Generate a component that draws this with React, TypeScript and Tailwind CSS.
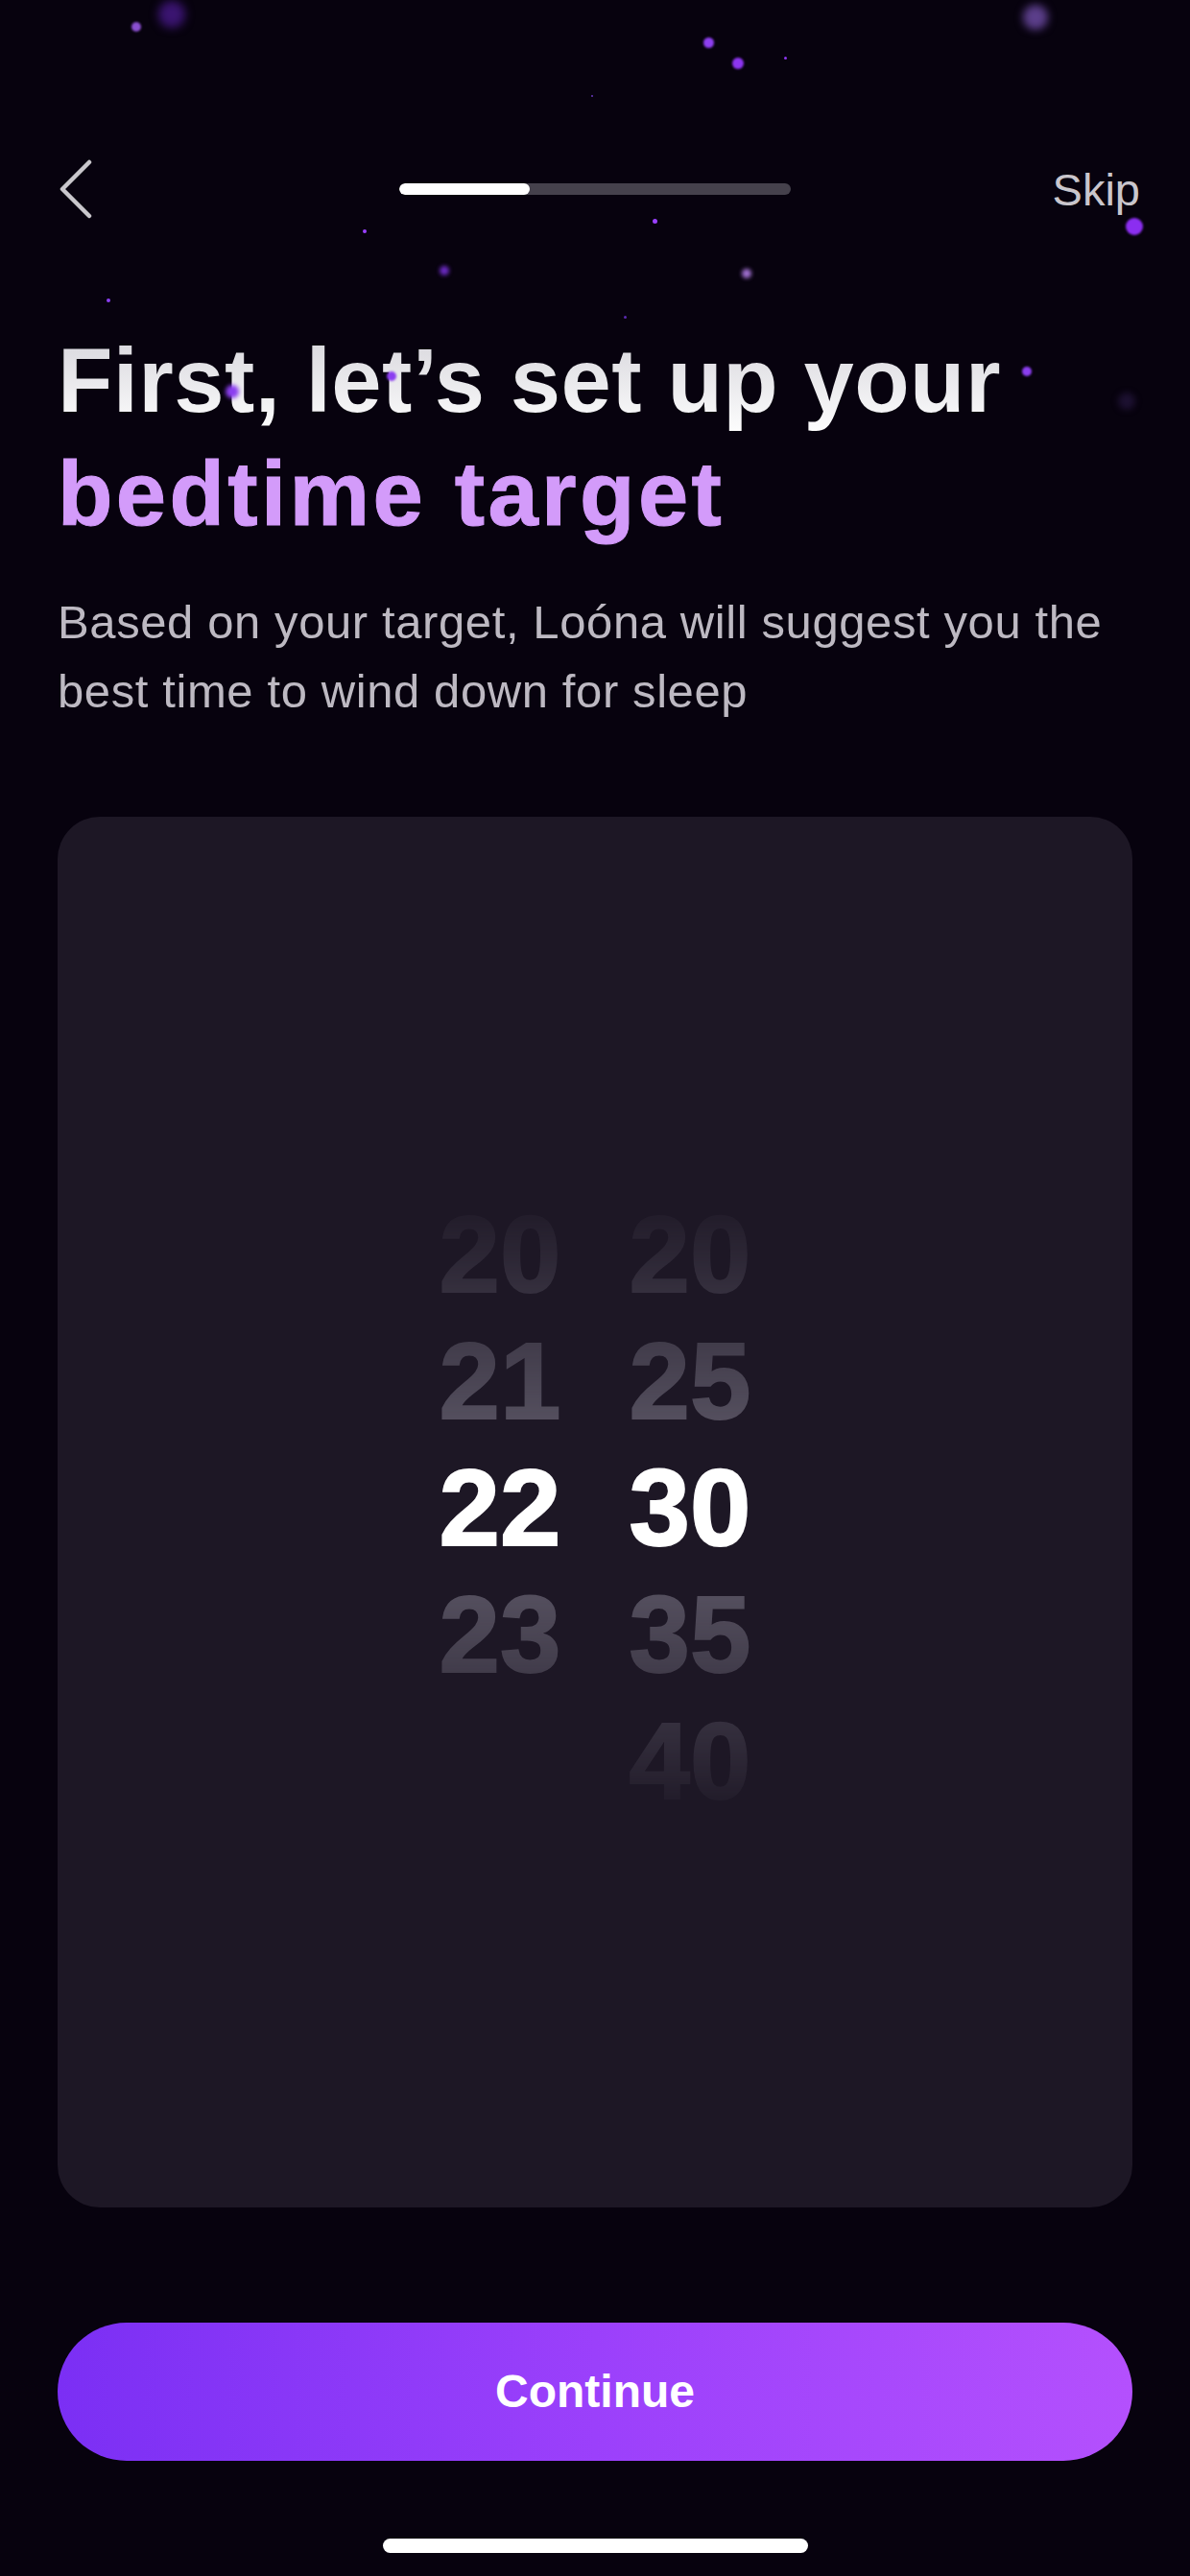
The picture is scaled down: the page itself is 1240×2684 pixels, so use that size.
import React from 'react';

const hours = [20, 21, 22, 23];
const minutes = [20, 25, 30, 35, 40];

// floating purple specks in the night sky
const sparks = [
  { x: 142, y: 28, d: 10, c: '#8a4fd0', b: 1 },
  { x: 179, y: 15, d: 28, c: '#3a1470', b: 5 },
  { x: 738, y: 44, d: 11, c: '#8e3ff0', b: 1 },
  { x: 769, y: 66, d: 12, c: '#8d35f0', b: 1 },
  { x: 818, y: 60, d: 3, c: '#8d35f0', b: 0 },
  { x: 617, y: 100, d: 2, c: '#6a3ac0', b: 0 },
  { x: 1079, y: 18, d: 26, c: '#5b3e8a', b: 4 },
  { x: 1182, y: 236, d: 18, c: '#8b2ef0', b: 1 },
  { x: 682, y: 230, d: 5, c: '#9a40ff', b: 0 },
  { x: 380, y: 241, d: 4, c: '#9a40ff', b: 0 },
  { x: 463, y: 282, d: 10, c: '#6a2ac0', b: 2 },
  { x: 778, y: 285, d: 10, c: '#a070d0', b: 2 },
  { x: 113, y: 313, d: 4, c: '#8a3ff0', b: 0 },
  { x: 651, y: 330, d: 3, c: '#5a2ab0', b: 0 },
  { x: 242, y: 408, d: 14, c: '#8b3ef0', b: 2 },
  { x: 408, y: 392, d: 10, c: '#8b3ef0', b: 1 },
  { x: 1070, y: 387, d: 10, c: '#8b3ef0', b: 1 },
  { x: 1174, y: 418, d: 18, c: '#1c1030', b: 3 },
];

interface PickerColumnProps {
  values: number[];
  selected: number;
}

const PickerColumn: React.FC<PickerColumnProps> = ({ values, selected }) => (
  <div className="flex w-[150px] flex-col items-center">
    {values.map((v) => (
      <div
        key={v}
        className={`h-[132px] text-[114px] leading-[132px] font-bold [-webkit-text-stroke:2px_currentColor] ${
          v === selected ? 'text-white' : 'text-[#5a5564]'
        }`}
      >
        {v}
      </div>
    ))}
  </div>
);

export default function App() {
  return (
    <div className="relative h-[2684px] w-full overflow-hidden bg-[#07020e] font-['Liberation_Sans',Arial,sans-serif]">
      {/* top bar */}
      <div className="mt-[157px] flex h-[80px] items-center justify-between px-[56px]">
        <div className="flex w-[140px] items-center">
          <svg width="36" height="62" viewBox="0 0 36 62" className="ml-[5px]">
            <path
              d="M32 3 L4 31 L32 59"
              fill="none"
              stroke="#c9c7cc"
              strokeWidth="4.5"
              strokeLinecap="round"
              strokeLinejoin="round"
            />
          </svg>
        </div>
        <div className="h-[12px] w-[408px] overflow-hidden rounded-full bg-[#45414c]">
          <div className="h-full w-[136px] rounded-full bg-white" />
        </div>
        <div className="flex w-[140px] justify-end">
          <span className="mr-[-4px] text-[47px] leading-none text-[#c9c6cc]">Skip</span>
        </div>
      </div>

      {/* title */}
      <h1 className="mt-[101px] px-[60px] text-[94px] leading-[118px] font-bold">
        <span className="block bg-gradient-to-b from-[#d4d3d9] to-white bg-clip-text tracking-[0.4px] text-transparent">
          First, let’s set up your
        </span>
        <span className="block text-[#d39bfa] tracking-[3.4px] [-webkit-text-stroke:1px_#d39bfa]">
          bedtime target
        </span>
      </h1>

      <p className="mt-[38px] px-[60px] text-[49px] leading-[72px] tracking-[0.6px] text-[#bdb9c2]">
        Based on your target, Loóna will suggest you the
        <br />
        best time to wind down for sleep
      </p>

      {/* time picker */}
      <div className="mx-[60px] mt-[95px] flex h-[1449px] items-center justify-center rounded-[44px] bg-[#1d1725]">
        <div className="mt-[-10px] flex h-[660px] gap-[48px] [mask-image:linear-gradient(to_bottom,transparent_0%,black_40%,black_60%,transparent_100%)] [-webkit-mask-image:linear-gradient(to_bottom,transparent_0%,black_40%,black_60%,transparent_100%)]">
          <PickerColumn values={hours} selected={22} />
          <PickerColumn values={minutes} selected={30} />
        </div>
      </div>

      <button className="mx-[60px] mt-[120px] flex h-[144px] w-[1120px] items-center justify-center rounded-full bg-gradient-to-r from-[#7b2ff4] via-[#9b40fb] to-[#b450fd] text-[48px] font-bold text-white">
        Continue
      </button>

      <div className="mx-auto mt-[81px] h-[15px] w-[443px] rounded-full bg-white" />

      {sparks.map((s, i) => (
        <span
          key={i}
          className="pointer-events-none absolute rounded-full"
          style={{
            left: s.x - s.d / 2,
            top: s.y - s.d / 2,
            width: s.d,
            height: s.d,
            background: s.c,
            filter: s.b ? `blur(${s.b}px)` : undefined,
          }}
        />
      ))}
    </div>
  );
}
